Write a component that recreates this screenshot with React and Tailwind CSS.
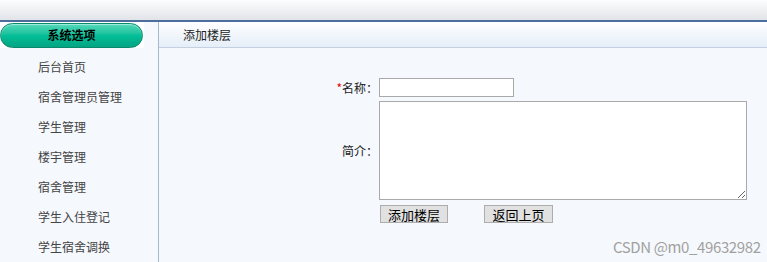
// App.jsx - 添加楼层 页面
const menu = ["后台首页", "宿舍管理员管理", "学生管理", "楼宇管理", "宿舍管理", "学生入住登记", "学生宿舍调换"];

export default function App() {
  return (
    <div
      className="relative w-[767px] h-[262px] overflow-hidden bg-[#f5f8fd] flex flex-col text-[12px] text-[#333]"
      style={{ fontFamily: '"Noto Sans CJK SC", "Liberation Sans", sans-serif' }}
    >
      {/* 顶部 */}
      <div className="h-[22px] shrink-0 bg-gradient-to-b from-[#fcfdfd] to-[#e1e4e8] border-b-2 border-[#4d6d9c]" />

      <div className="flex flex-1 min-h-0">
        {/* 左侧菜单 */}
        <div className="w-[159px] shrink-0 border-r border-[#a8b7cc] flex flex-col">
          <div className="w-[144px] h-[26px] bg-white flex items-center">
            <div className="w-[143px] h-[25px] rounded-full border border-[#0a8a6c] bg-gradient-to-b from-[#4fd8bb] via-[#02bf98] to-[#03a482] flex items-center justify-center shadow-[inset_0_1px_1px_rgba(255,255,255,0.5)]">
              <span className="font-bold text-[12px] text-black">系统选项</span>
            </div>
          </div>
          <ul className="pt-[4px]">
            {menu.map((m) => (
              <li key={m} className="h-[30px] flex items-center pl-[38px] text-[#444]">
                {m}
              </li>
            ))}
          </ul>
        </div>

        {/* 右侧内容 */}
        <div className="flex-1 flex flex-col">
          <div className="h-[26px] shrink-0 bg-gradient-to-b from-[#ffffff] to-[#e5eef8] border-b border-[#c3d1e1] flex items-center pl-[24px] text-[#222]">
            添加楼层
          </div>

          <div className="pt-[30px] flex flex-col">
            <div className="flex items-center">
              <label className="w-[220px] text-right pr-[1px] text-[#222]">
                <span className="text-red-600">*</span>名称：
              </label>
              <input type="text" className="w-[135px] h-[19px] bg-white border border-[#a9a9a9] outline-none" />
            </div>
            <div className="flex items-center mt-[4px]">
              <label className="w-[220px] text-right pr-[1px] text-[#222]">简介：</label>
              <textarea className="w-[368px] h-[99px] bg-white border border-[#a9a9a9] outline-none" />
            </div>
            <div className="flex mt-[5px] pl-[221px] gap-[36px]">
              <button className="w-[68px] h-[18px] bg-[#e1e1e1] border border-[#adadad] text-[13px] leading-none text-black">
                添加楼层
              </button>
              <button className="w-[69px] h-[18px] bg-[#e1e1e1] border border-[#adadad] text-[13px] leading-none text-black">
                返回上页
              </button>
            </div>
          </div>
        </div>
      </div>

      {/* 水印 */}
      <div className="absolute left-[613px] top-[236px] text-[15px] text-[#a0a0a0] tracking-tight" style={{ textShadow: "0 0 1px #fff" }}>
        CSDN @m0_49632982
      </div>
    </div>
  );
}
